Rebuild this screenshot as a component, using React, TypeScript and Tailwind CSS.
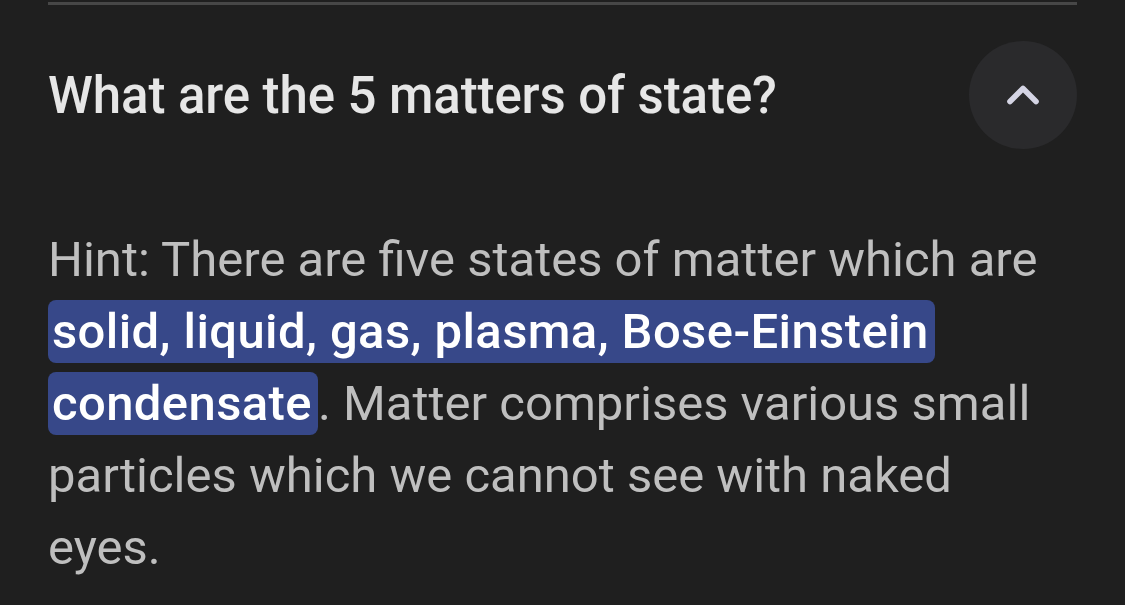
import { ChevronUp } from "lucide-react";

export default function App() {
  return (
    <div
      className="w-[1125px] h-[605px] overflow-hidden bg-[#1f1f1f] px-[48px]"
      style={{ fontFamily: "Roboto, 'Noto Sans', sans-serif" }}
    >
      {/* top divider */}
      <div className="h-[3px] w-full bg-[#474747] mt-[2px]" />

      {/* question row */}
      <div className="flex items-center justify-between mt-[36px] h-[108px]">
        <h2 className="text-[51px] leading-none font-medium text-[#e6e6e6] tracking-[-0.1px]">
          What are the 5 matters of state?
        </h2>
        <button className="w-[108px] h-[108px] rounded-full bg-[#2a2a2c] flex items-center justify-center shrink-0">
          <ChevronUp size={52} strokeWidth={2.6} className="text-[#d4d4e4]" />
        </button>
      </div>

      {/* answer */}
      <p className="mt-[75px] pr-[17px] text-[49px] leading-[72px] text-[#bfbfbf]">
        Hint: There are five states of matter which are{" "}
        <span className="bg-[#374889] text-white font-medium tracking-[0.4px] rounded-lg pl-[4px] pr-[6px] py-[3px] box-decoration-clone">
          solid, liquid, gas, plasma, Bose-Einstein condensate
        </span>
        . Matter comprises various small particles which we cannot see with
        naked eyes.
      </p>
    </div>
  );
}
